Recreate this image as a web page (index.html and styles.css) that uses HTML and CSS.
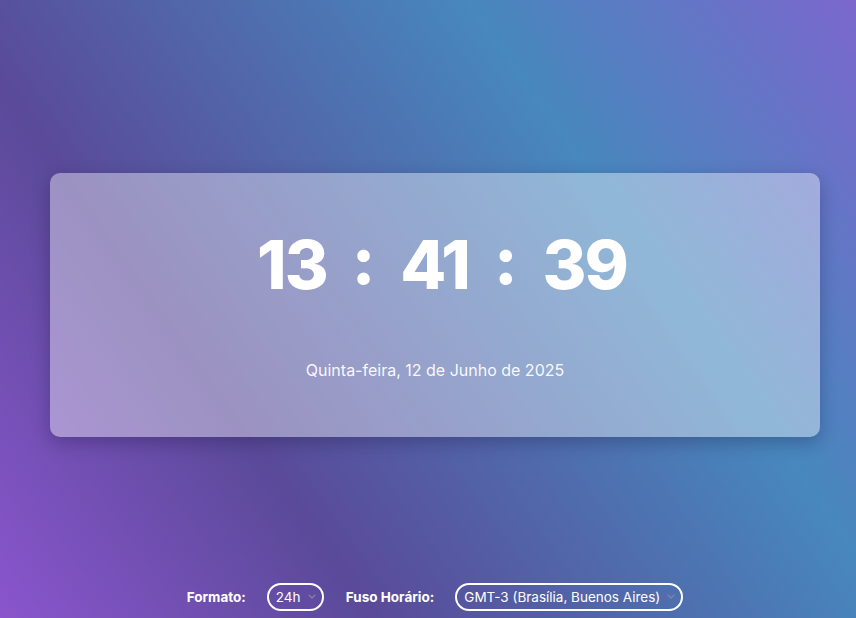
FILE: index.html
```html
<!DOCTYPE html>
<html lang="pt-BR">
<head>
<meta charset="utf-8">
<title>Relógio</title>
<link rel="stylesheet" href="styles.css">
</head>
<body>
<main class="page">
  <section class="card">
    <div class="clock">
      <span class="unit">13</span>
      <span class="sep">:</span>
      <span class="unit">41</span>
      <span class="sep">:</span>
      <span class="unit">39</span>
    </div>
    <p class="date">Quinta-feira, 12 de Junho de 2025</p>
  </section>
  <div class="controls">
    <label class="label" for="fmt">Formato:</label>
    <span class="select-wrap">
      <select id="fmt" class="select"><option>24h</option><option>12h</option></select>
      <svg class="chev" viewBox="0 0 8 5" width="8" height="5"><path d="M1 1l3 3 3-3" fill="none" stroke="currentColor" stroke-width="1.1" stroke-linecap="round" stroke-linejoin="round"/></svg>
    </span>
    <label class="label" for="tz">Fuso Horário:</label>
    <span class="select-wrap">
      <select id="tz" class="select"><option>GMT-3 (Brasília, Buenos Aires)</option></select>
      <svg class="chev" viewBox="0 0 8 5" width="8" height="5"><path d="M1 1l3 3 3-3" fill="none" stroke="currentColor" stroke-width="1.1" stroke-linecap="round" stroke-linejoin="round"/></svg>
    </span>
  </div>
</main>
</body>
</html>
```
FILE: styles.css
```css
* { box-sizing: border-box; }
html, body { margin: 0; height: 100%; }
body {
  font-family: "Inter", "Open Sans", sans-serif;
  color: #fff;
  background: linear-gradient(55deg, #8a55cd 0%, #5a4a99 29%, #4788bd 70%, #7b67cd 100%);
  overflow: hidden;
}
.page {
  width: 856px;
  height: 618px;
  padding: 173px 36px 0 50px;
  display: flex;
  flex-direction: column;
}
.card {
  height: 264px;
  border-radius: 10px;
  background: rgba(255, 255, 255, 0.4);
  box-shadow: 0 6px 18px rgba(20, 10, 60, 0.28);
  display: flex;
  flex-direction: column;
  align-items: center;
  padding-top: 56px;
}
.clock {
  display: flex;
  align-items: center;
  gap: 27px;
  margin-left: 12px;
  font-weight: 800;
  font-size: 67px;
  line-height: 72px;
  letter-spacing: -2px;
}
.unit { margin-right: -2px; }
.sep { position: relative; top: -5px; }
.date {
  margin: 59px 0 0;
  font-size: 16px;
  font-weight: 400;
  color: rgba(255, 255, 255, 0.95);
}
.controls {
  margin-top: 146px;
  display: flex;
  justify-content: center;
  align-items: center;
}
.label {
  font-weight: 700;
  font-size: 13.5px;
  margin-right: 21px;
}
.select-wrap {
  position: relative;
  display: inline-flex;
  margin-right: 22px;
}
.select-wrap:last-child { margin-right: 0; }
.select {
  appearance: none;
  -webkit-appearance: none;
  font-family: inherit;
  font-size: 13.5px;
  color: #fff;
  background: transparent;
  border: 2px solid #fff;
  border-radius: 14px;
  height: 28px;
  padding: 0 21px 0 7px;
  outline: none;
}
.chev {
  position: absolute;
  right: 8px;
  top: 11px;
  color: #8a82b0;
  pointer-events: none;
}
```
